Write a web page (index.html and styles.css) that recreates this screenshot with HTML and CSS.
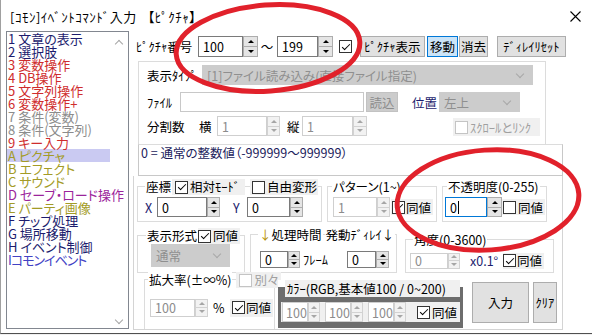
FILE: index.html
```html
<!DOCTYPE html>
<html lang="ja">
<head>
    <meta charset="UTF-8">
    <title>[コモン]イベントコマンド入力 【ピクチャ】</title>
    <link rel="stylesheet" href="styles.css">
</head>
<body>

<!-- ダイアログ本体 -->
<div class="window">
    <div class="titlebar">
        <span class="title">[ｺﾓﾝ]ｲﾍﾞﾝﾄｺﾏﾝﾄﾞ入力</span>
        <span class="title-sub">【ﾋﾟｸﾁｬ】</span>
        <svg class="close" width="11" height="11" viewBox="0 0 11 11">
            <path d="M0.5 0.5L10.5 10.5M10.5 0.5L0.5 10.5" stroke="#000" stroke-width="1.1" fill="none"/>
        </svg>
    </div>

    <div class="client">
        <!-- コマンド一覧 -->
        <div class="cmdlist">
            <ul class="items">
                <li class="navy">1 文章の表示</li>
                <li class="navy">2 選択肢</li>
                <li class="red">3 変数操作</li>
                <li class="red">4 DB操作</li>
                <li class="red">5 文字列操作</li>
                <li class="red">6 変数操作+</li>
                <li class="grey">7 条件(変数)</li>
                <li class="grey">8 条件(文字列)</li>
                <li class="red">9 キー入力</li>
                <li class="olive selected">A ピクチャ</li>
                <li class="olive">B エフェクト</li>
                <li class="olive">C サウンド</li>
                <li class="purple">D セーブ・ロード操作</li>
                <li class="olive">E パーティ画像</li>
                <li class="navy">F チップ処理</li>
                <li class="navy">G 場所移動</li>
                <li class="navy">H イベント制御</li>
                <li class="blue narrow">Iコモンイベント</li>
            </ul>
            <div class="vscroll">
                <span class="chev up"></span>
                <span class="chev down"></span>
            </div>
        </div>

        <div class="main">
            <!-- ピクチャ番号の行 -->
            <div class="toprow">
                <span class="lbl w62 ml3">ﾋﾟｸﾁｬ番号</span>
                <span class="spin"><span class="field w45">100</span><span class="updown w15"><i></i><i></i></span></span>
                <span class="tilde">～</span>
                <span class="spin"><span class="field w41">199</span><span class="updown w15"><i></i><i></i></span></span>
                <span class="cb on ml6"></span>
                <span class="btn w65 ml8">ﾋﾟｸﾁｬ表示</span>
                <span class="btn focus w31 ml2">移動</span>
                <span class="btn w29 ml1">消去</span>
                <span class="btn w69 ml9">ﾃﾞｨﾚｲﾘｾｯﾄ</span>
            </div>

            <!-- 表示タイプ -->
            <div class="upper">
                <div class="urow">
                    <span class="lbl w55">表示ﾀｲﾌﾟ</span>
                    <span class="dd w331">[1]ファイル読み込み(直接ファイル指定)</span>
                </div>
                <div class="urow r2">
                    <span class="lbl w33">ﾌｧｲﾙ</span>
                    <span class="filebox w184"></span>
                    <span class="btn dis w32 ml2">読込</span>
                    <span class="lbl navy w27 ml14">位置</span>
                    <span class="dd w81">左上</span>
                </div>
                <div class="urow r3">
                    <span class="lbl w52">分割数</span>
                    <span class="lbl w18">横</span>
                    <span class="spin dis"><span class="field w50">1</span><span class="updown w13"><i></i><i></i></span></span>
                    <span class="lbl w15 ml7">縦</span>
                    <span class="spin dis"><span class="field w51">1</span><span class="updown w14"><i></i><i></i></span></span>
                    <span class="ck dis link"><span class="cb"></span>ｽｸﾛｰﾙとﾘﾝｸ</span>
                </div>
            </div>

            <div class="memo">0 = 通常の整数値（-999999～999999）</div>

            <div class="lower">
                <div class="lrow lrow1">
                    <div class="grp g-coord">
                        <div class="grp-head">
                            <span class="hl">座標</span>
                            <span class="ck rel"><span class="cb on"></span>相対ﾓｰﾄﾞ</span>
                            <span class="ck free"><span class="cb"></span>自由変形</span>
                        </div>
                        <div class="grp-body">
                            <span class="lbl navy w12">X</span>
                            <span class="spin"><span class="field w50">0</span><span class="updown w13"><i></i><i></i></span></span>
                            <span class="lbl navy w14 ml13">Y</span>
                            <span class="spin"><span class="field w43">0</span><span class="updown w13"><i></i><i></i></span></span>
                        </div>
                    </div>
                    <div class="grp g-pattern">
                        <div class="grp-head"><span class="hl">パターン(1~)</span></div>
                        <div class="grp-body">
                            <span class="spin dis"><span class="field w44">1</span><span class="updown w13"><i></i><i></i></span></span>
                            <span class="ck ml1"><span class="cb on"></span>同値</span>
                        </div>
                    </div>
                    <div class="grp g-opacity">
                        <div class="grp-head"><span class="hl">不透明度(0-255)</span></div>
                        <div class="grp-body">
                            <span class="spin"><span class="field focus w42">0<b class="caret"></b></span><span class="updown w15"><i></i><i></i></span></span>
                            <span class="ck"><span class="cb"></span>同値</span>
                        </div>
                    </div>
                </div>

                <div class="lrow lrow2">
                    <div class="grp g-form">
                        <div class="grp-head">
                            <span class="hl">表示形式</span>
                            <span class="ck"><span class="cb on"></span>同値</span>
                        </div>
                        <div class="grp-body">
                            <span class="dd w79">通常</span>
                        </div>
                    </div>
                    <div class="grp g-time">
                        <div class="grp-head">
                            <span class="hl"><span class="arrow">↓</span>処理時間</span>
                            <span class="hl ml2">発動ﾃﾞｨﾚｲ↓</span>
                        </div>
                        <div class="grp-body">
                            <span class="spin"><span class="field w28">0</span><span class="updown w12"><i></i><i></i></span></span>
                            <span class="lbl w30 ml3">ﾌﾚｰﾑ</span>
                            <span class="spin ml14"><span class="field w29">0</span><span class="updown w13"><i></i><i></i></span></span>
                        </div>
                    </div>
                    <div class="grp g-angle">
                        <div class="grp-head"><span class="hl">角度(0-3600)</span></div>
                        <div class="grp-body">
                            <span class="spin dis"><span class="field w38">0</span><span class="updown w12"><i></i><i></i></span></span>
                            <span class="lbl navy w33 ml10">x0.1°</span>
                            <span class="ck"><span class="cb on"></span>同値</span>
                        </div>
                    </div>
                </div>

                <div class="lrow lrow3">
                    <div class="grp g-scale">
                        <div class="grp-head">
                            <span class="hl">拡大率(±∞%)</span>
                            <span class="ck dis ml4"><span class="cb"></span>別々</span>
                        </div>
                        <div class="grp-body">
                            <span class="spin dis"><span class="field w45">100</span><span class="updown w13"><i></i><i></i></span></span>
                            <span class="lbl w13 ml5">%</span>
                            <span class="ck ml4"><span class="cb on"></span>同値</span>
                        </div>
                    </div>
                    <div class="colorbox">
                        <div class="color-head">ｶﾗｰ(RGB,基本値100 / 0~200)</div>
                        <div class="color-row">
                            <span class="spin dis"><span class="field w26">100</span><span class="updown w12"><i></i><i></i></span></span>
                            <span class="spin dis"><span class="field w26">100</span><span class="updown w12"><i></i><i></i></span></span>
                            <span class="spin dis"><span class="field w26">100</span><span class="updown w12"><i></i><i></i></span></span>
                            <span class="ck ml4"><span class="cb on"></span>同値</span>
                        </div>
                    </div>
                    <span class="btn big w57 ml9">入力</span>
                    <span class="btn big w24 ml4">ｸﾘｱ</span>
                </div>
            </div>
        </div>
    </div>

    <!-- 赤丸の書き込み -->
    <svg class="marks" width="592" height="335" viewBox="0 0 592 335">
        <ellipse cx="268" cy="48" rx="92" ry="43" transform="rotate(-4 268 48)" fill="none" stroke="#e1212b" stroke-width="5"/>
        <ellipse cx="488" cy="200" rx="91" ry="50" transform="rotate(-4 488 200)" fill="none" stroke="#e1212b" stroke-width="5"/>
    </svg>
</div>

</body>
</html>
```

FILE: styles.css
```css
* {
    box-sizing: border-box;
}
body {
    margin: 0;
    background-color: #f0f0f0;
    font-family: "Noto Sans CJK JP", "Noto Sans", sans-serif;
    font-size: 12.5px;
    font-feature-settings: "palt";
    color: #000;
}

.window {
    position: relative;
    width: 592px;
    height: 334px;
    background-color: #fff;
    border-left: 1px solid #a0a0a0;
    border-bottom: 1px solid #505050;
    overflow: hidden;
}
.titlebar {
    display: flex;
    align-items: center;
    height: 31px;
    padding: 2px 0 0 9px;
    font-size: 13px;
    white-space: nowrap;
}
.title {
    letter-spacing: 0.5px;
}
.title-sub {
    margin-left: 11px;
    letter-spacing: 0.5px;
}
.close {
    margin-left: auto;
    margin-right: 11px;
}
.client {
    display: flex;
    align-items: flex-start;
}

/* コマンド一覧 */
.cmdlist {
    display: flex;
    flex: none;
    margin-left: 5px;
    width: 123px;
    height: 298px;
    border: 1px solid #828790;
}
.items {
    list-style: none;
    margin: 0;
    padding: 0;
    width: 103px;
    font-size: 13px;
    line-height: 13px;
}
.items li {
    height: 13px;
    padding-left: 1px;
    white-space: nowrap;
}
.items li.selected {
    background-color: #cacaf2;
}
.items li.narrow {
    letter-spacing: -1px;
}
.navy { color: #1c1c6e; }
.red { color: #cf2d2d; }
.grey { color: #8c8c8c; }
.olive { color: #a39b26; }
.purple { color: #9b249b; }
.blue { color: #4242c4; }

.vscroll {
    flex: 1;
    display: flex;
    flex-direction: column;
    justify-content: space-between;
    align-items: center;
    padding: 9px 0 5px;
}
.chev {
    width: 6px;
    height: 6px;
    border-left: 1px solid #a6a6a6;
    border-top: 1px solid #a6a6a6;
}
.chev.up { transform: rotate(45deg); }
.chev.down { transform: rotate(225deg); }

/* 右側 */
.main {
    flex: none;
    margin-left: 4px;
    width: 430px;
}
.toprow {
    display: flex;
    align-items: center;
    height: 21px;
    margin-top: 5px;
}
.lbl {
    flex: none;
    white-space: nowrap;
}
.tilde {
    display: flex;
    justify-content: center;
    width: 10px;
    margin: 0 5px 0 4px;
}

.spin {
    display: flex;
    flex: none;
    height: 20px;
}
.toprow .spin { height: 21px; }
.g-time .spin { height: 17px; }
.g-angle .spin { height: 16px; }
.g-scale .spin { height: 18px; }

.field {
    display: flex;
    align-items: center;
    border: 1px solid #7a7a7a;
    background-color: #fff;
    padding-left: 4px;
    white-space: nowrap;
    overflow: hidden;
}
.field.focus {
    border-color: #0078d7;
}
.caret {
    width: 1px;
    height: 13px;
    margin-left: 1px;
    background-color: #000;
}
.updown {
    display: flex;
    flex-direction: column;
}
.updown i {
    flex: 1;
    display: flex;
    align-items: center;
    justify-content: center;
    border: 1px solid #adadad;
    background-color: #e5e5e5;
}
.updown i + i {
    border-top: none;
}
.updown i::after {
    content: "";
    border-left: 3px solid transparent;
    border-right: 3px solid transparent;
    border-bottom: 3px solid #000;
}
.updown i + i::after {
    border-bottom: none;
    border-top: 3px solid #000;
}
.spin.dis .field {
    border-color: #cfcfcf;
    color: #8c8c8c;
}
.spin.dis .updown i {
    border-color: #d2d2d2;
    background-color: #f2f2f2;
}
.spin.dis .updown i::after {
    border-bottom-color: #a6a6a6;
}
.spin.dis .updown i + i::after {
    border-top-color: #a6a6a6;
}
.colorbox .field {
    padding-left: 3px;
}

.cb {
    display: flex;
    justify-content: center;
    flex: none;
    width: 13px;
    height: 13px;
    border: 1px solid #333;
    background-color: #fff;
}
.cb.on::after {
    content: "";
    width: 7px;
    height: 3px;
    margin-top: 2.5px;
    border-left: 1.5px solid #000;
    border-bottom: 1.5px solid #000;
    transform: rotate(-45deg);
}
.ck {
    display: flex;
    align-items: center;
    gap: 2px;
    height: 16px;
    padding: 0 2px;
    background-color: #f0f0f0;
    white-space: nowrap;
}
.ck.dis {
    color: #a0a0a0;
}
.ck.dis .cb {
    border-color: #c4c4c4;
}

.btn {
    display: flex;
    align-items: center;
    justify-content: center;
    flex: none;
    height: 21px;
    border: 1px solid #adadad;
    background-color: #e1e1e1;
    white-space: nowrap;
}
.btn.focus {
    background-color: #cce4f7;
    border-color: #0078d7;
}
.btn.dis {
    height: 20px;
    background-color: #cccccc;
    border-color: #c2c2c2;
    color: #8c8c8c;
}
.btn.big {
    height: 41px;
    margin-top: 9px;
}

.dd {
    display: flex;
    align-items: center;
    justify-content: space-between;
    flex: none;
    height: 20px;
    padding: 0 9px 0 4px;
    background-color: #cccccc;
    border: 1px solid #cccccc;
    color: #8f8f8f;
    white-space: nowrap;
}
.dd::after {
    content: "";
    width: 5px;
    height: 5px;
    margin-top: -3px;
    border-right: 1px solid #a8a8a8;
    border-bottom: 1px solid #a8a8a8;
    transform: rotate(45deg);
}
.filebox {
    flex: none;
    height: 20px;
    border: 1px solid #c8c8c8;
    background-color: #fff;
}

/* 表示タイプの枠 */
.upper {
    margin: 4px 0 0 5px;
    width: 408px;
    height: 84px;
    padding: 3px 0 0 8px;
    border: 1px solid #dcdcdc;
}
.urow {
    display: flex;
    align-items: center;
    height: 20px;
}
.urow.r2 { margin-top: 7px; }
.urow.r3 { margin-top: 4px; }
.ck.link {
    align-self: flex-end;
    margin-left: 86px;
    width: 87px;
    height: 18px;
    padding-left: 2px;
}

.memo {
    margin: -1px 0 0 5px;
    width: 425px;
    height: 32px;
    padding: 1px 0 0 2px;
    border: 1px solid #c8c8c8;
    border-top-color: #dcdcdc;
    line-height: 14px;
    color: #1c1c5c;
    white-space: nowrap;
}

/* 下半分 */
.lower {
    width: 430px;
    height: 154px;
    border: 1px solid #d4d4d4;
    border-top: none;
}
.lrow {
    display: flex;
    align-items: flex-start;
}
.lrow1 { height: 46px; }
.lrow2 { height: 51px; }

.grp {
    flex: none;
    border: 1px solid #dcdcdc;
}
.grp-head {
    display: flex;
    height: 16px;
    margin-top: -8px;
    line-height: 16px;
    white-space: nowrap;
}
.hl {
    padding: 0 1px;
    background-color: #fff;
}
.arrow {
    color: #b58f00;
}
.grp-body {
    display: flex;
    align-items: center;
}

.g-coord { margin: 10px 0 0 3px; width: 185px; height: 36px; }
.g-coord .grp-head { padding-left: 7px; }
.g-coord .grp-body { margin-top: 2px; padding-left: 7px; }
.ck.rel { padding: 0 5px 0 3px; }
.ck.free { margin-left: 5px; padding: 0 1px 0 2px; }

.g-pattern { margin: 10px 0 0 5px; width: 110px; height: 36px; }
.g-pattern .grp-head { padding-left: 4px; }
.g-pattern .grp-body { margin-top: 2px; padding-left: 5px; }
.g-pattern .ck { padding: 0 2px 0 1px; gap: 1px; }

.g-opacity { margin: 10px 0 0 5px; width: 105px; height: 36px; }
.g-opacity .grp-head { padding-left: 4px; }
.g-opacity .grp-body { margin-top: 2px; padding-left: 2px; }
.g-opacity .ck { padding: 0 2px 0 1px; }

.g-form { margin: 13px 0 0 3px; width: 108px; height: 38px; }
.g-form .grp-head { padding-left: 8px; }
.g-form .ck { padding: 0 2px 0 0; }
.g-form .grp-body { padding-left: 13px; }
.g-form .dd { height: 23px; }

.g-time { margin: 12px 0 0 5px; width: 147px; height: 39px; }
.g-time .grp-head { padding-left: 7px; }
.g-time .grp-body { margin-top: 7px; padding-left: 9px; }

.g-angle { margin: 17px 0 0 8px; width: 149px; height: 34px; }
.g-angle .grp-head { padding-left: 7px; }
.g-angle .grp-body { margin-top: 3px; padding-left: 4px; }
.g-angle .ck { padding: 0 2px 0 0; gap: 1px; }

.g-scale { margin: 6px 0 0 10px; width: 131px; height: 50px; border-bottom: none; }
.g-scale .grp-head { padding-left: 3px; }
.g-scale .grp-head .ck { padding-left: 3px; }
.g-scale .grp-body { margin-top: 10px; padding-left: 5px; }
.g-scale .grp-body .ck { gap: 1px; height: 18px; }

.colorbox {
    flex: none;
    margin: 7px 0 0 3px;
    width: 185px;
    height: 48px;
    padding: 0 3px;
    background: linear-gradient(#fff 0 7px, #6d6d6d 7px);
}
.color-head {
    margin-left: 4px;
    width: 175px;
    height: 17px;
    padding-left: 2px;
    line-height: 17px;
    background-color: #f0f0f0;
    white-space: nowrap;
}
.color-row {
    display: flex;
    align-items: center;
    gap: 5px;
    margin-top: 5px;
    width: 179px;
    height: 20px;
    padding-left: 1px;
    background-color: #f0f0f0;
}
.color-row .ck {
    height: 20px;
}

.marks {
    position: absolute;
    top: 0;
    left: -1px;
    pointer-events: none;
}

/* 幅と余白 */
.w12 { width: 12px; }
.w13 { width: 13px; }
.w14 { width: 14px; }
.w15 { width: 15px; }
.w18 { width: 18px; }
.w24 { width: 24px; }
.w26 { width: 26px; }
.w27 { width: 27px; }
.w28 { width: 28px; }
.w29 { width: 29px; }
.w30 { width: 30px; }
.w31 { width: 31px; }
.w32 { width: 32px; }
.w33 { width: 33px; }
.w38 { width: 38px; }
.w41 { width: 41px; }
.w42 { width: 42px; }
.w43 { width: 43px; }
.w44 { width: 44px; }
.w45 { width: 45px; }
.w50 { width: 50px; }
.w51 { width: 51px; }
.w52 { width: 52px; }
.w55 { width: 55px; }
.w57 { width: 57px; }
.w62 { width: 62px; }
.w65 { width: 65px; }
.w69 { width: 69px; }
.w79 { width: 79px; }
.w81 { width: 81px; }
.w184 { width: 184px; }
.w331 { width: 331px; }
.ml1 { margin-left: 1px; }
.ml2 { margin-left: 2px; }
.ml3 { margin-left: 3px; }
.ml4 { margin-left: 4px; }
.ml5 { margin-left: 5px; }
.ml6 { margin-left: 6px; }
.ml7 { margin-left: 7px; }
.ml8 { margin-left: 8px; }
.ml9 { margin-left: 9px; }
.ml10 { margin-left: 10px; }
.ml13 { margin-left: 13px; }
.ml14 { margin-left: 14px; }
```
